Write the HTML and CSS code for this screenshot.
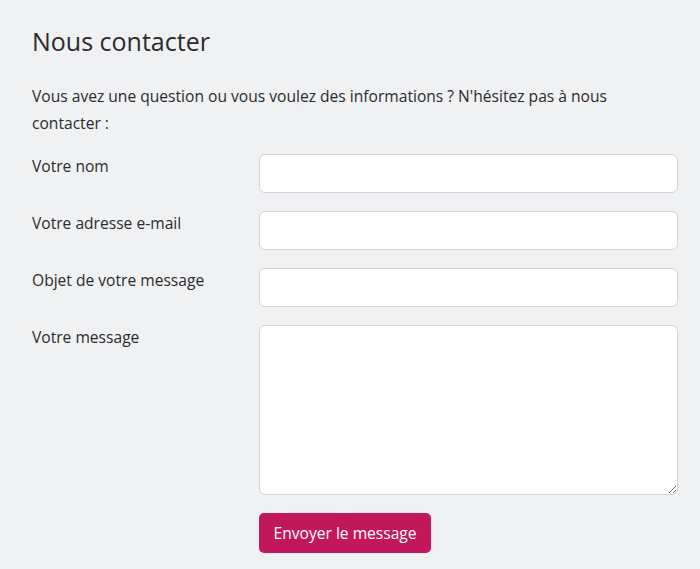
FILE: index.html
```html
<!DOCTYPE html>
<html lang="fr">
<head>
<meta charset="utf-8">
<link rel="stylesheet" href="styles.css">
</head>
<body>
<main class="page">
  <h1 class="title">Nous contacter</h1>
  <p class="intro">Vous avez une question ou vous voulez des informations ? N'hésitez pas à nous contacter :</p>
  <form class="form">
    <label class="label" for="nom">Votre nom</label>
    <input class="field" id="nom" type="text">
    <label class="label" for="mail">Votre adresse e-mail</label>
    <input class="field" id="mail" type="email">
    <label class="label" for="objet">Objet de votre message</label>
    <input class="field" id="objet" type="text">
    <label class="label" for="msg">Votre message</label>
    <textarea class="field area" id="msg"></textarea>
    <div></div>
    <div><button class="btn" type="button">Envoyer le message</button></div>
  </form>
</main>
</body>
</html>
```
FILE: styles.css
```css
html, body {
  margin: 0;
  background: #f0f1f3;
}
body {
  font-family: "Open Sans", sans-serif;
  color: #2b2b2e;
}
.page {
  padding: 21px 22px 0 32px;
}
.title {
  margin: 0;
  font-size: 25px;
  font-weight: 400;
  line-height: 40px;
}
.intro {
  margin: 22px 0 0;
  font-size: 15.6px;
  line-height: 27px;
  max-width: 600px;
}
.form {
  display: grid;
  grid-template-columns: 227px 1fr;
  row-gap: 18px;
  margin-top: 17px;
}
.label {
  font-size: 15.6px;
  padding-top: 1px;
  line-height: 22px;
}
.field {
  box-sizing: border-box;
  height: 39px;
  border: 1px solid #d3d3d6;
  border-radius: 6px;
  background: #fff;
  margin: 0;
  font: inherit;
}
.area {
  height: 170px;
  resize: vertical;
}
.btn {
  background: #c2185b;
  color: #fff;
  border: none;
  border-radius: 5px;
  height: 40px;
  padding: 0 14.5px;
  font-family: "Open Sans", sans-serif;
  font-size: 15.6px;
}
```
